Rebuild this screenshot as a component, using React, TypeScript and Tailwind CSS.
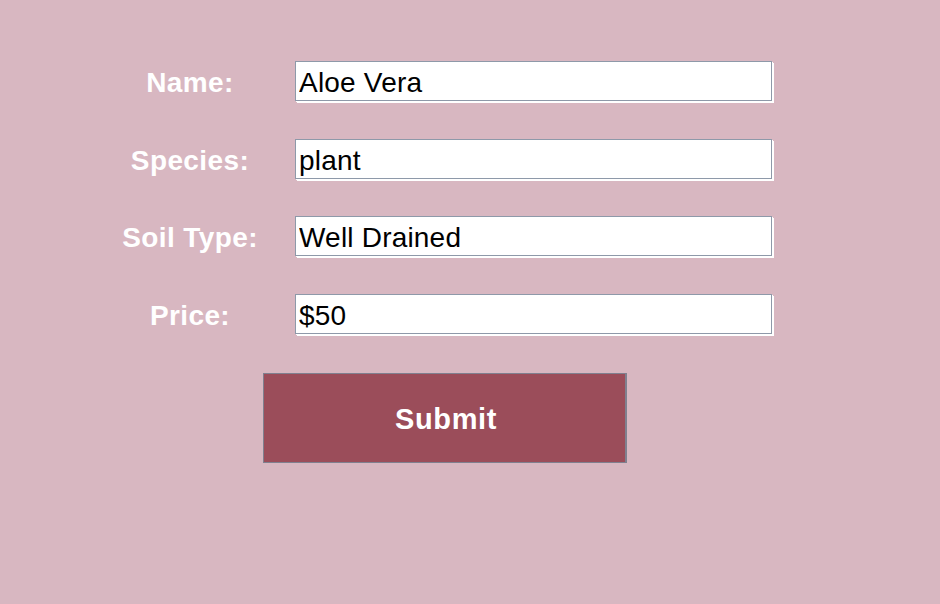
import { useState } from "react";

const fields = [
  { label: "Name:", value: "Aloe Vera" },
  { label: "Species:", value: "plant" },
  { label: "Soil Type:", value: "Well Drained" },
  { label: "Price:", value: "$50" },
];

export default function App() {
  const [values, setValues] = useState(fields.map((f) => f.value));

  return (
    <div className="w-[940px] h-[604px] bg-[#d8b7c1] font-['Liberation_Sans',Arial,sans-serif] pt-[61px] pl-[100px]">
      <div className="flex flex-col gap-[37.7px]">
        {fields.map((f, i) => (
          <div key={f.label} className="flex items-center h-[40px]">
            <label className="w-[180px] text-center text-[28px] leading-[32px] tracking-[0.4px] font-bold text-white pt-[4px]">
              {f.label}
            </label>
            <input
              value={values[i]}
              onChange={(e) => {
                const next = [...values];
                next[i] = e.target.value;
                setValues(next);
              }}
              className="ml-[15px] w-[477px] h-[40px] bg-white border border-[#8e99a9] shadow-[1px_1px_0_#ffffff,2px_2px_0_#ffffff] px-[3px] pt-[4px] text-[28px] leading-[32px] tracking-[0.2px] text-black outline-none"
            />
          </div>
        ))}
        <div className="pl-[163px] pt-[1px]">
          <button className="w-[364px] h-[90px] bg-[#9b4d5a] border border-[#80808f] border-r-2 text-white text-[29px] leading-[34px] tracking-[0.6px] font-bold pl-[3px] pt-[2px]">
            Submit
          </button>
        </div>
      </div>
    </div>
  );
}
